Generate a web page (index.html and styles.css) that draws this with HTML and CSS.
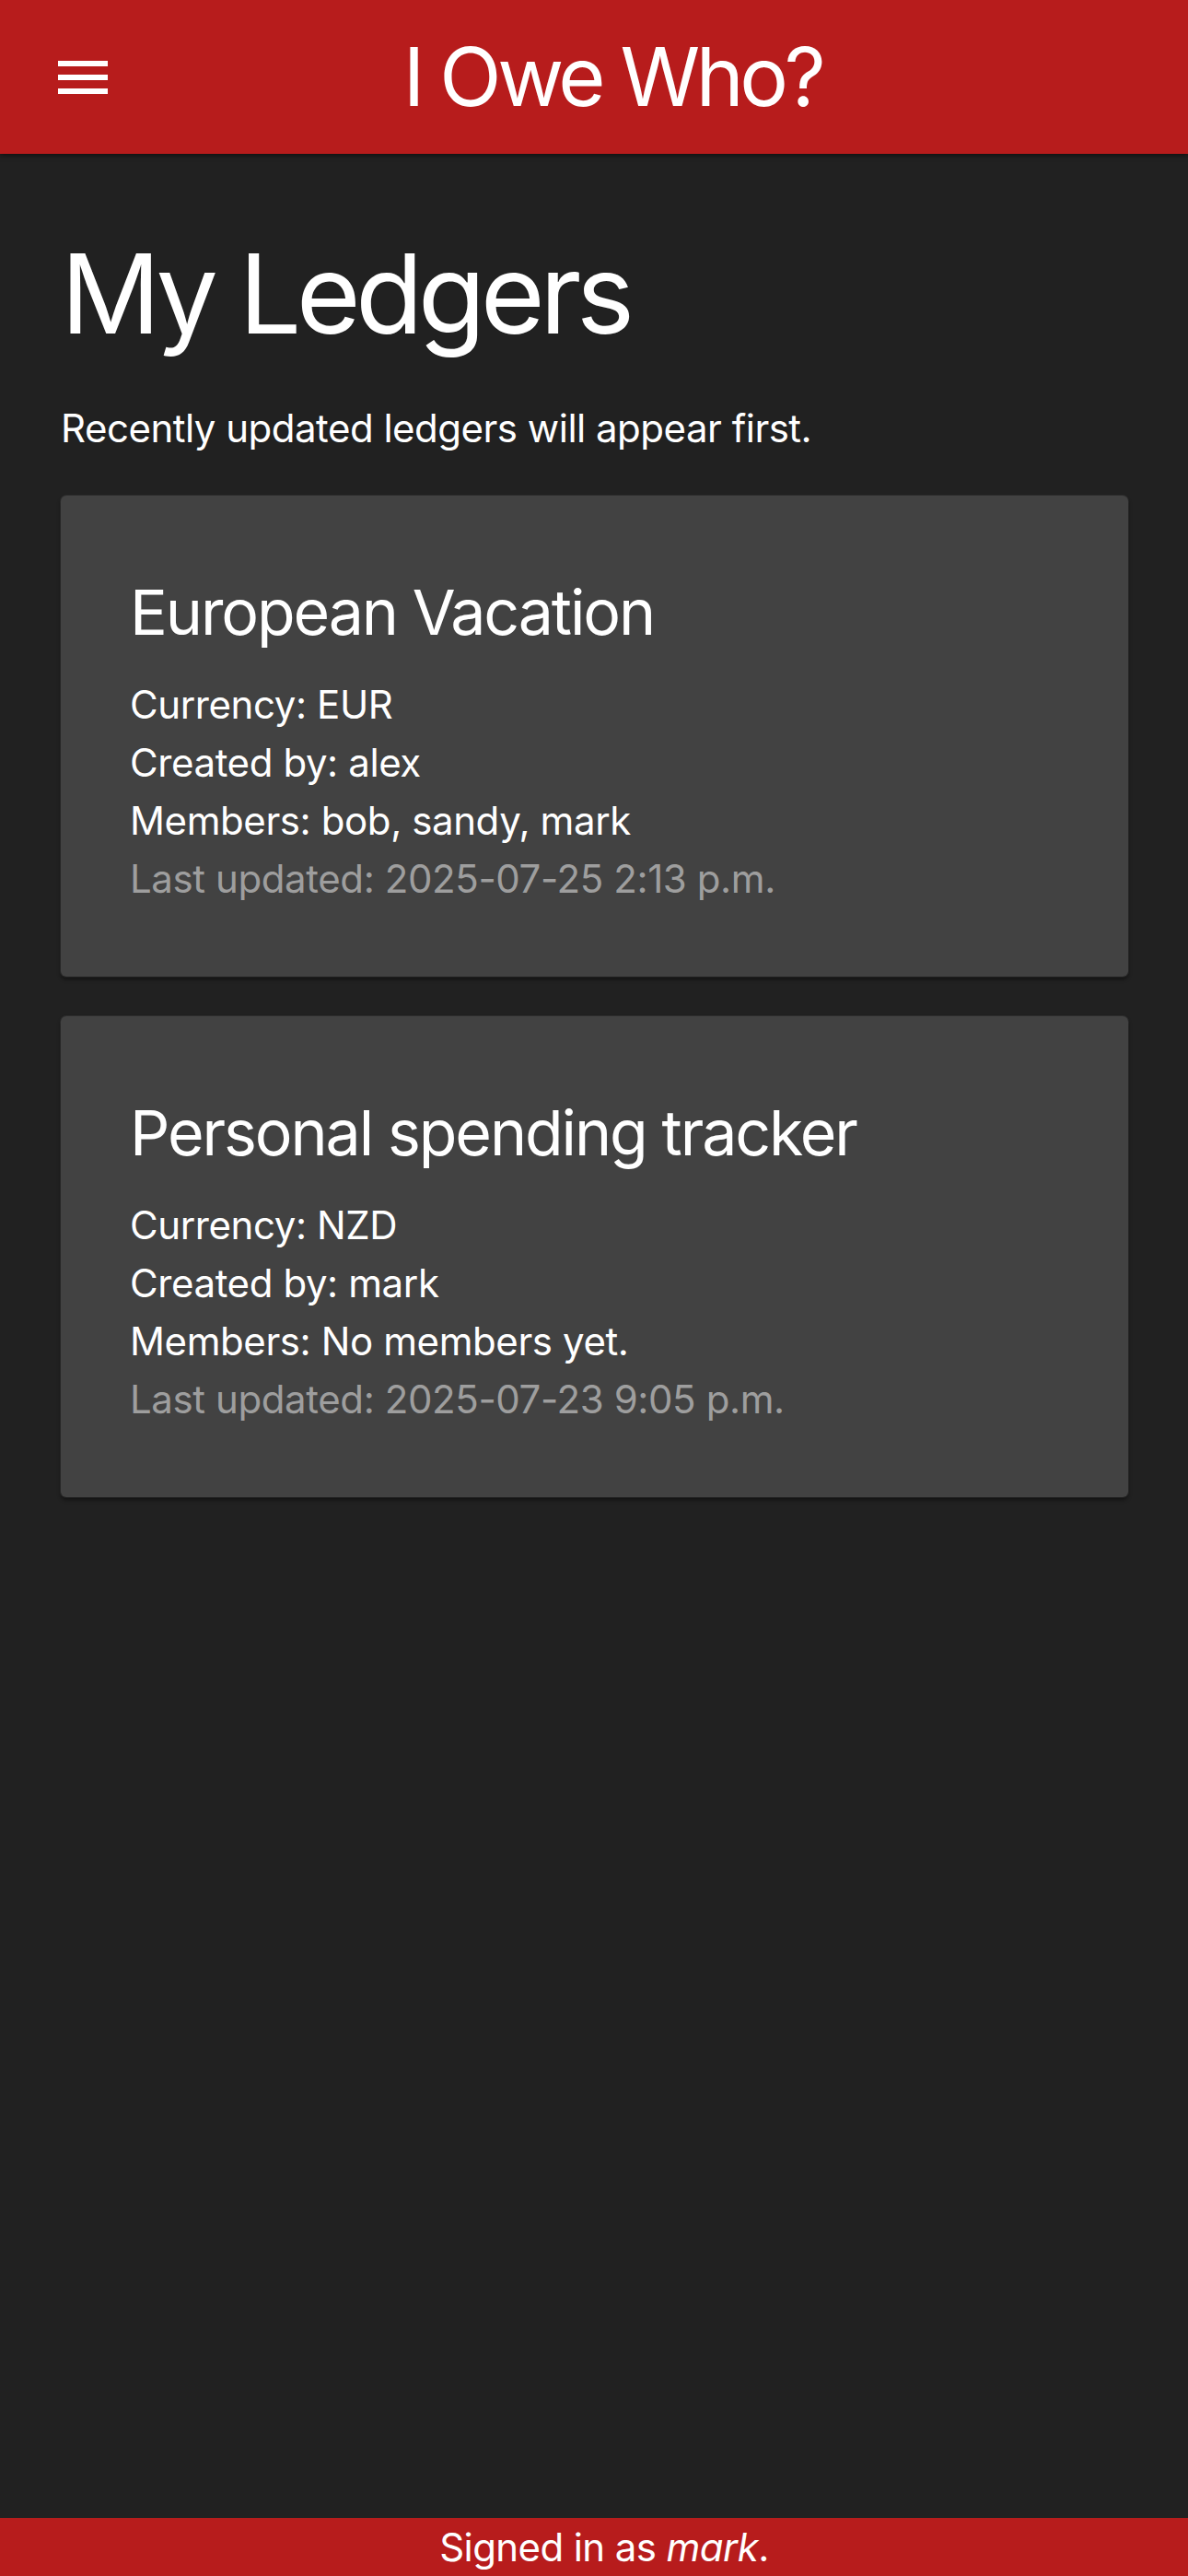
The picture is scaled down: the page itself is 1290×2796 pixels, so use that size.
FILE: index.html
```html
<!DOCTYPE html>
<html lang="en">
<head>
<meta charset="utf-8">
<title>I Owe Who?</title>
<link rel="stylesheet" href="styles.css">
</head>
<body>
<header class="topbar">
  <div class="menu-btn" aria-label="Menu">
    <span class="bar"></span><span class="bar"></span><span class="bar"></span>
  </div>
  <div class="brand">I Owe Who?</div>
</header>
<main class="content">
  <h1 class="page-title">My Ledgers</h1>
  <p class="intro">Recently updated ledgers will appear first.</p>
  <section class="ledger-list">
    <article class="ledger-card">
      <h2 class="ledger-name">European Vacation</h2>
      <p class="ledger-line">Currency: EUR</p>
      <p class="ledger-line">Created by: alex</p>
      <p class="ledger-line">Members: bob, sandy, mark</p>
      <p class="ledger-line muted">Last updated: 2025-07-25 2:13 p.m.</p>
    </article>
    <article class="ledger-card">
      <h2 class="ledger-name">Personal spending tracker</h2>
      <p class="ledger-line">Currency: NZD</p>
      <p class="ledger-line">Created by: mark</p>
      <p class="ledger-line">Members: No members yet.</p>
      <p class="ledger-line muted">Last updated: 2025-07-23 9:05 p.m.</p>
    </article>
  </section>
</main>
<footer class="status">Signed in as <em>mark</em>.</footer>
</body>
</html>
```

FILE: styles.css
```css
html, body {
  margin: 0;
  padding: 0;
}
body {
  background: #212121;
  color: #ffffff;
  font-family: Inter, "Noto Sans", "Liberation Sans", sans-serif;
  min-height: 2796px;
  display: flex;
  flex-direction: column;
}
.topbar {
  height: 167px;
  background: #b71c1c;
  display: flex;
  align-items: center;
  box-shadow: 0 2px 5px rgba(0, 0, 0, 0.5);
  position: relative;
  z-index: 1;
}
.menu-btn {
  width: 120px;
  padding-left: 63px;
  box-sizing: border-box;
  display: flex;
  flex-direction: column;
  gap: 9px;
}
.bar {
  display: block;
  width: 54px;
  height: 6px;
  background: #ffffff;
}
.brand {
  flex: 1;
  text-align: center;
  padding-right: 80px;
  font-size: 88px;
  line-height: 1.2;
  font-weight: 400;
  letter-spacing: -4.4px;
}
.content {
  flex: 1;
  padding: 0 65px 0 66px;
}
.page-title {
  margin: 80px 0 0;
  font-size: 120px;
  line-height: 144px;
  font-weight: 400;
  letter-spacing: -5.6px;
}
.intro {
  margin: 42px 0 0;
  font-size: 42px;
  line-height: 63px;
  letter-spacing: -0.5px;
}
.ledger-list {
  margin-top: 42px;
  display: flex;
  flex-direction: column;
  gap: 43px;
}
.ledger-card {
  background: #424242;
  border-radius: 6px;
  padding: 85px 75px 75px;
  box-shadow: 0 0 0 1px rgba(255, 255, 255, 0.06), 0 3px 4px rgba(0, 0, 0, 0.45);
}
.ledger-name {
  margin: 0 0 28px;
  font-size: 68px;
  line-height: 82px;
  font-weight: 400;
  letter-spacing: -2.1px;
}
.ledger-line {
  margin: 0;
  font-size: 42px;
  line-height: 63px;
  letter-spacing: -0.4px;
}
.muted {
  color: #9e9e9e;
}
.status {
  height: 63px;
  background: #b71c1c;
  text-align: center;
  padding-left: 22px;
  font-size: 42px;
  line-height: 63px;
  letter-spacing: -0.6px;
}
```
